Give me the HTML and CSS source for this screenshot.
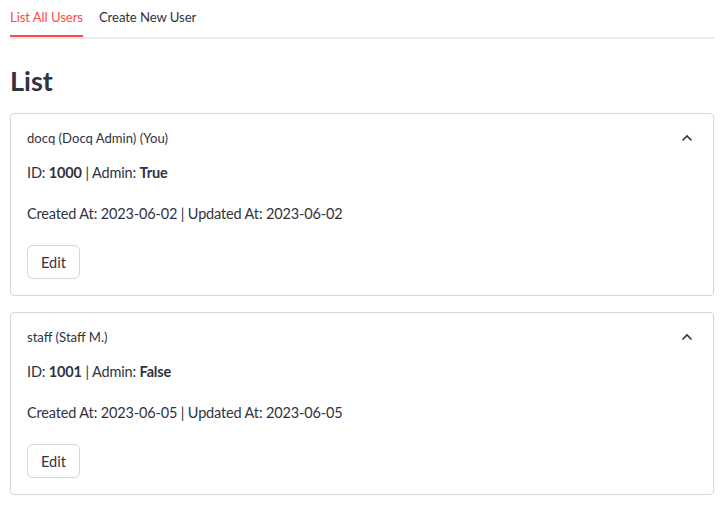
FILE: index.html
```html
<!DOCTYPE html>
<html>
<head>
<meta charset="utf-8">
<link rel="stylesheet" href="styles.css">
</head>
<body>
<div class="page">
  <div class="tabs">
    <div class="tab active">List All Users</div>
    <div class="tab">Create New User</div>
  </div>
  <h2 class="title">List</h2>
  <div class="expander">
    <div class="exp-header">
      <span class="exp-label">docq (Docq Admin) (You)</span>
      <svg class="chev" width="12" height="8" viewBox="0 0 12 8"><path d="M1.5 6.5 L6 2 L10.5 6.5" fill="none" stroke="#31333f" stroke-width="1.6"/></svg>
    </div>
    <div class="exp-body">
      <p class="line">ID: <b>1000</b> | Admin: <b>True</b></p>
      <p class="line">Created At: 2023-06-02 | Updated At: 2023-06-02</p>
      <button class="btn">Edit</button>
    </div>
  </div>
  <div class="expander">
    <div class="exp-header">
      <span class="exp-label">staff (Staff M.)</span>
      <svg class="chev" width="12" height="8" viewBox="0 0 12 8"><path d="M1.5 6.5 L6 2 L10.5 6.5" fill="none" stroke="#31333f" stroke-width="1.6"/></svg>
    </div>
    <div class="exp-body">
      <p class="line">ID: <b>1001</b> | Admin: <b>False</b></p>
      <p class="line">Created At: 2023-06-05 | Updated At: 2023-06-05</p>
      <button class="btn">Edit</button>
    </div>
  </div>
</div>
</body>
</html>
```
FILE: styles.css
```css
html, body {
  margin: 0;
  padding: 0;
  background: #ffffff;
}
body {
  font-family: Lato, "Noto Sans", sans-serif;
  color: #31333f;
}
.page {
  padding: 0 14px 0 10px;
}
.tabs {
  display: flex;
  gap: 16px;
  height: 37px;
  border-bottom: 2px solid #ebebeb;
}
.tab {
  font-size: 13.2px;
  letter-spacing: -0.1px;
  line-height: 35px;
  height: 35px;
  color: #31333f;
  position: relative;
}
.tab.active {
  color: #ff4b4b;
}
.tab.active::after {
  content: "";
  position: absolute;
  left: 0;
  right: 0;
  bottom: -2px;
  height: 2px;
  background: #ff4b4b;
}
.title {
  margin: 0;
  padding-top: 23px;
  font-size: 27px;
  line-height: 37px;
  font-weight: 700;
  height: 51px;
}
.expander {
  border: 1px solid #d6d6d9;
  border-radius: 4px;
  margin-bottom: 16px;
}
.exp-header {
  display: flex;
  align-items: center;
  justify-content: space-between;
  height: 47px;
  padding: 0 20px 0 16px;
}
.exp-label {
  font-size: 13.1px;
}
.chev {
  display: block;
}
.exp-body {
  padding: 0 16px 16px 16px;
}
.line {
  margin: 0 0 17px 0;
  font-size: 14.5px;
  letter-spacing: -0.15px;
  line-height: 24px;
}
.line b {
  font-weight: 700;
}
.btn {
  display: block;
  margin-top: 19px;
  height: 34px;
  padding: 0 13px;
  font-family: inherit;
  font-size: 14.5px;
  color: #31333f;
  background: #ffffff;
  border: 1px solid #d6d6d9;
  border-radius: 6px;
}
```
